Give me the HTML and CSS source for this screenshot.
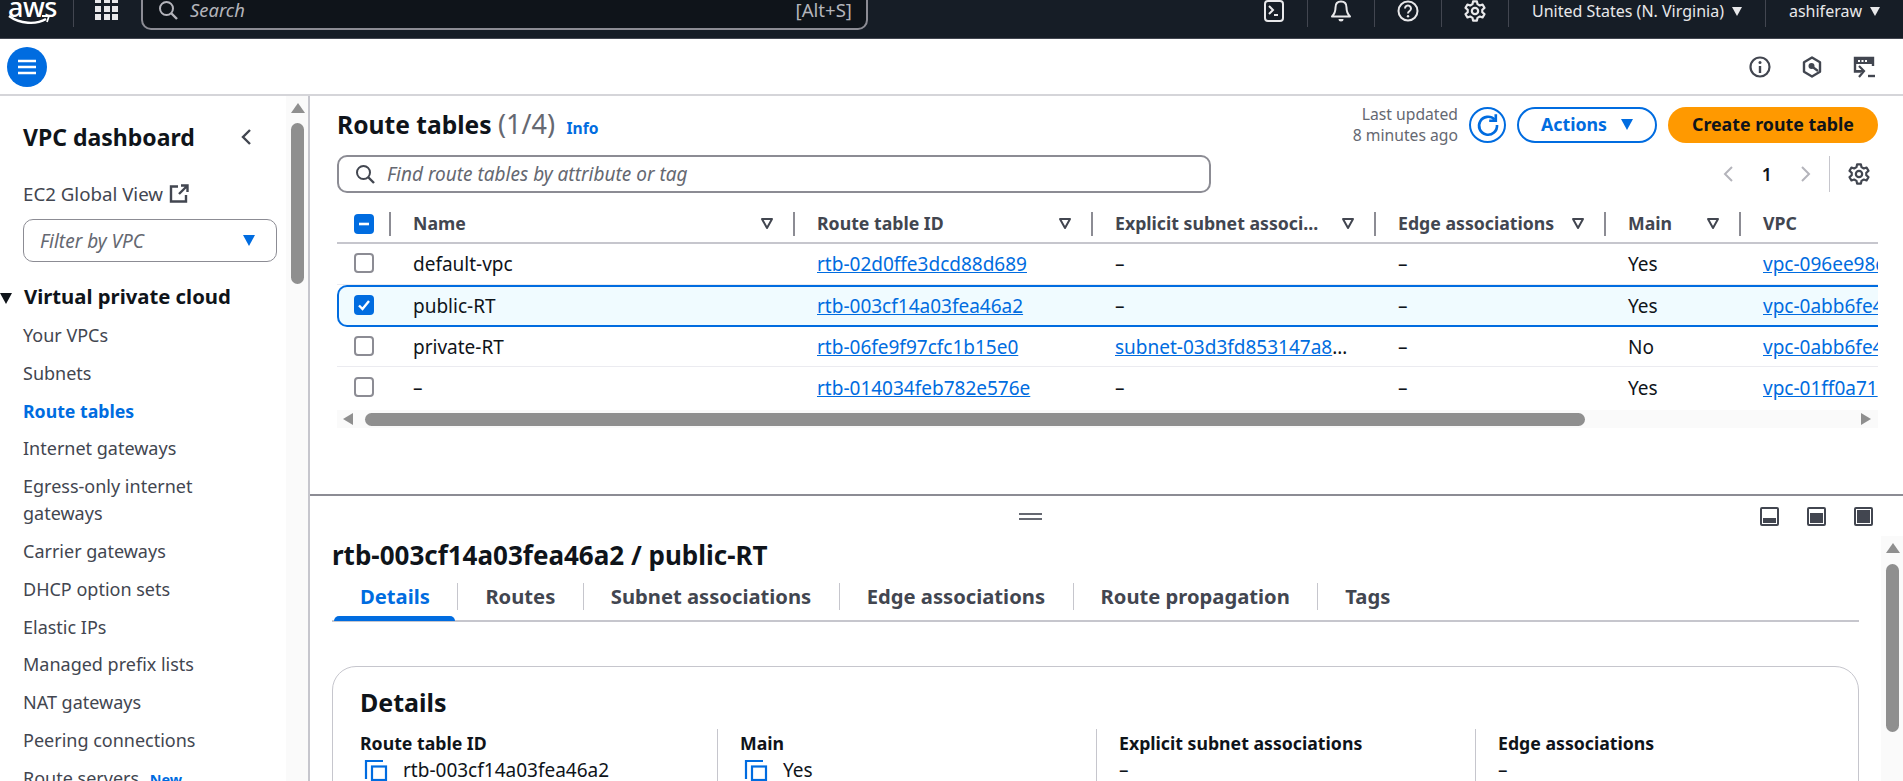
FILE: index.html
```html
<!DOCTYPE html>
<html lang="en">
<head>
    <meta charset="UTF-8">
    <title>Route tables | VPC Console</title>
    <link rel="stylesheet" href="styles.css">
</head>
<body>
    <svg class="defs" width="0" height="0">
        <symbol id="gear" viewBox="0 0 16 16">
            <path d="M6.6 1h2.8l.4 2 1.7 1 2-.7 1.4 2.4-1.6 1.4v1.8l1.6 1.4-1.4 2.4-2-.7-1.7 1-.4 2H6.600l-.4-2-1.700-1-2 .7-1.400-2.400 1.600-1.400V7.100L1.100 5.700l1.400-2.400 2 .7 1.700-1z" fill="none" stroke="currentColor" stroke-width="1.6" stroke-linejoin="round"/>
            <circle cx="8" cy="8" r="2.3" fill="none" stroke="currentColor" stroke-width="1.6"/>
        </symbol>
        <symbol id="sort" viewBox="0 0 14 14">
            <path d="M2 3h10l-5 9z" fill="none" stroke="currentColor" stroke-width="2" stroke-linejoin="round"/>
        </symbol>
        <symbol id="copy" viewBox="0 0 24 22">
            <path d="M2 20V2h17" fill="none" stroke="currentColor" stroke-width="2.2"/>
            <rect x="8" y="7.5" width="14" height="13.5" fill="none" stroke="currentColor" stroke-width="2.2"/>
        </symbol>
    </svg>

    <header class="topbar">
        <div class="logo">
            <span class="logo-text">aws</span>
            <svg class="smile" viewBox="0 0 42 10"><path d="M1 1c11 8 27 9 37 3" fill="none" stroke="#fff" stroke-width="2.4"/><path d="M34 1h7l-2 6" fill="none" stroke="#fff" stroke-width="1.8"/></svg>
        </div>
        <div class="top-sep sep-logo"></div>
        <div class="apps">
            <i></i><i></i><i></i><i></i><i></i><i></i><i></i><i></i><i></i>
        </div>
        <div class="top-search">
            <svg class="top-search-icon" viewBox="0 0 20 20"><circle cx="8.5" cy="8.5" r="6.5" fill="none" stroke="currentColor" stroke-width="2"/><path d="M13 13l6 6" stroke="currentColor" stroke-width="2.4"/></svg>
            <span class="top-search-text">Search</span>
            <span class="top-search-key">[Alt+S]</span>
        </div>
        <div class="top-right">
            <div class="top-item">
                <svg class="top-icon" viewBox="0 0 22 22"><rect x="2" y="1" width="18" height="20" rx="3" fill="none" stroke="currentColor" stroke-width="2"/><path d="M6 6l4 4-4 4M11 15h4" fill="none" stroke="currentColor" stroke-width="2"/></svg>
            </div>
            <div class="top-item">
                <svg class="top-icon" viewBox="0 0 22 22"><path d="M11 1.500c-3.500 0-5.500 2.500-5.500 6 0 4-1 6.500-3.500 9h18c-2.500-2.500-3.500-5-3.500-9 0-3.500-2-6-5.500-6z" fill="none" stroke="currentColor" stroke-width="2" stroke-linejoin="round"/><path d="M8.500 19a2.500 2.500 0 0 0 5 0z" fill="currentColor"/></svg>
            </div>
            <div class="top-item">
                <svg class="top-icon" viewBox="0 0 22 22"><circle cx="11" cy="11" r="9.5" fill="none" stroke="currentColor" stroke-width="2"/><path d="M8 8.500a3 3 0 1 1 4.600 2.500c-1 .7-1.600 1.200-1.600 2.500" fill="none" stroke="currentColor" stroke-width="2"/><circle cx="11" cy="16.3" r="1.2" fill="currentColor"/></svg>
            </div>
            <div class="top-item">
                <svg class="top-icon"><use href="#gear"/></svg>
            </div>
            <div class="top-item top-text">United States (N. Virginia)<span class="caret caret-white"></span></div>
            <div class="top-item top-text top-last">ashiferaw<span class="caret caret-white"></span></div>
        </div>
    </header>

    <div class="subbar">
        <button class="menu-btn">
            <svg viewBox="0 0 20 16" width="20" height="16"><path d="M1 2h18M1 8h18M1 14h18" stroke="#fff" stroke-width="2.6"/></svg>
        </button>
        <div class="subbar-icons">
            <svg viewBox="0 0 22 22"><circle cx="11" cy="11" r="9.5" fill="none" stroke="currentColor" stroke-width="2.2"/><path d="M11 10v7" stroke="currentColor" stroke-width="2.4"/><circle cx="11" cy="6.5" r="1.5" fill="currentColor"/></svg>
            <svg viewBox="0 0 22 22"><path d="M11 1.500l8 4.700v9.600l-8 4.700-8-4.700V6.200z" fill="none" stroke="currentColor" stroke-width="2.4" stroke-linejoin="round"/><circle cx="10.5" cy="10" r="3" fill="currentColor"/><path d="M11 10.500l6 4.500" stroke="currentColor" stroke-width="2.2"/></svg>
            <svg viewBox="0 0 22 22"><path d="M8 15.500H2V2h18v8" fill="none" stroke="currentColor" stroke-width="2.4"/><path d="M2 2h18v6H2z" fill="currentColor"/><path d="M5 5h2M8.500 5h2M12 5h2" stroke="#fff" stroke-width="2"/><path d="M6 10l5 5-5 6M1 15h9" fill="none" stroke="currentColor" stroke-width="2.2"/><path d="M15 20h7" stroke="currentColor" stroke-width="2.4"/></svg>
        </div>
    </div>

    <div class="layout">
        <aside class="sidebar">
            <nav class="nav">
                <div class="nav-title">
                    <span>VPC dashboard</span>
                    <svg viewBox="0 0 12 18" width="12" height="18"><path d="M10 2L3 9l7 7" fill="none" stroke="currentColor" stroke-width="2.4"/></svg>
                </div>
                <div class="nav-global">
                    EC2 Global View
                    <svg viewBox="0 0 20 20" width="20" height="20"><path d="M9 2.500H2v15h15V11" fill="none" stroke="currentColor" stroke-width="2.4"/><path d="M12 1.500h6.500V8M18 2l-8 8" fill="none" stroke="currentColor" stroke-width="2.4"/></svg>
                </div>
                <div class="nav-filter">
                    <span>Filter by VPC</span>
                    <span class="caret caret-blue"></span>
                </div>
                <div class="nav-section"><span class="caret caret-dark"></span>Virtual private cloud</div>
                <ul class="nav-list">
                    <li>Your VPCs</li>
                    <li>Subnets</li>
                    <li class="active">Route tables</li>
                    <li>Internet gateways</li>
                    <li>Egress-only internet gateways</li>
                    <li>Carrier gateways</li>
                    <li>DHCP option sets</li>
                    <li>Elastic IPs</li>
                    <li>Managed prefix lists</li>
                    <li>NAT gateways</li>
                    <li>Peering connections</li>
                    <li>Route servers <span class="new">New</span></li>
                </ul>
            </nav>
            <div class="vbar">
                <span class="vbar-up"></span>
                <span class="vbar-thumb nav-thumb"></span>
            </div>
        </aside>

        <main class="main">
            <section class="list-pane">
                <div class="list-head">
                    <h1 class="list-title">Route tables <span class="count">(1/4)</span> <a class="info">Info</a></h1>
                    <div class="list-actions">
                        <div class="updated">Last updated<br>8 minutes ago</div>
                        <button class="btn-refresh">
                            <svg viewBox="0 0 20 20" width="24" height="24"><path d="M15.500 5.500A7.500 7.500 0 1 0 17.500 10" fill="none" stroke="currentColor" stroke-width="2.2"/><path d="M16.500 1v5.500H11" fill="none" stroke="currentColor" stroke-width="2.2"/></svg>
                        </button>
                        <button class="btn btn-outline">Actions<span class="caret caret-blue"></span></button>
                        <button class="btn btn-primary">Create route table</button>
                    </div>
                </div>

                <div class="list-tools">
                    <div class="find">
                        <svg viewBox="0 0 20 20" width="20" height="20"><circle cx="8.5" cy="8.5" r="6.5" fill="none" stroke="currentColor" stroke-width="2"/><path d="M13 13l6 6" stroke="currentColor" stroke-width="2.4"/></svg>
                        <span>Find route tables by attribute or tag</span>
                    </div>
                    <div class="pager">
                        <svg viewBox="0 0 12 18" width="12" height="18"><path d="M10 2L3 9l7 7" fill="none" stroke="currentColor" stroke-width="2"/></svg>
                        <b>1</b>
                        <svg viewBox="0 0 12 18" width="12" height="18"><path d="M2 2l7 7-7 7" fill="none" stroke="currentColor" stroke-width="2"/></svg>
                    </div>
                    <div class="pager-gear"><svg width="22" height="22"><use href="#gear"/></svg></div>
                </div>

                <div class="table-wrap">
                    <table class="routes">
                        <colgroup>
                            <col class="c-check"><col class="c-name"><col class="c-id"><col class="c-explicit"><col class="c-edge"><col class="c-main"><col class="c-vpc">
                        </colgroup>
                        <thead>
                            <tr>
                                <th><div class="th-box th-check"><span class="check check-on"><svg viewBox="0 0 20 20"><path d="M5 10h10" stroke="#fff" stroke-width="2.6"/></svg></span></div></th>
                                <th><div class="th-box">Name<svg class="sort"><use href="#sort"/></svg></div></th>
                                <th><div class="th-box">Route table ID<svg class="sort"><use href="#sort"/></svg></div></th>
                                <th><div class="th-box">Explicit subnet associ...<svg class="sort"><use href="#sort"/></svg></div></th>
                                <th><div class="th-box">Edge associations<svg class="sort"><use href="#sort"/></svg></div></th>
                                <th><div class="th-box">Main<svg class="sort"><use href="#sort"/></svg></div></th>
                                <th><div class="th-box th-last">VPC</div></th>
                            </tr>
                        </thead>
                        <tbody>
                            <tr>
                                <td><span class="check"></span></td>
                                <td>default-vpc</td>
                                <td><a>rtb-02d0ffe3dcd88d689</a></td>
                                <td>–</td>
                                <td>–</td>
                                <td>Yes</td>
                                <td><a>vpc-096ee98c</a></td>
                            </tr>
                            <tr class="selected">
                                <td><span class="check check-on"><svg viewBox="0 0 20 20"><path d="M5 10.500l3.500 3.500 6.500-8" fill="none" stroke="#fff" stroke-width="2.4"/></svg></span></td>
                                <td>public-RT</td>
                                <td><a>rtb-003cf14a03fea46a2</a></td>
                                <td>–</td>
                                <td>–</td>
                                <td>Yes</td>
                                <td><a>vpc-0abb6fe4</a></td>
                            </tr>
                            <tr>
                                <td><span class="check"></span></td>
                                <td>private-RT</td>
                                <td><a>rtb-06fe9f97cfc1b15e0</a></td>
                                <td><a>subnet-03d3fd853147a8</a>…</td>
                                <td>–</td>
                                <td>No</td>
                                <td><a>vpc-0abb6fe4</a></td>
                            </tr>
                            <tr>
                                <td><span class="check"></span></td>
                                <td>–</td>
                                <td><a>rtb-014034feb782e576e</a></td>
                                <td>–</td>
                                <td>–</td>
                                <td>Yes</td>
                                <td><a>vpc-01ff0a71</a></td>
                            </tr>
                        </tbody>
                    </table>
                </div>

                <div class="hbar">
                    <span class="hbar-left"></span>
                    <span class="hbar-thumb"></span>
                    <span class="hbar-right"></span>
                </div>
            </section>

            <section class="detail-pane">
                <div class="detail-tools">
                    <span class="handle"></span>
                    <div class="split-icons">
                        <span class="split split-low"><i></i></span>
                        <span class="split split-mid"><i></i></span>
                        <span class="split split-full"><i></i></span>
                    </div>
                </div>
                <div class="detail-body">
                    <div class="detail">
                        <h2 class="detail-title">rtb-003cf14a03fea46a2 / public-RT</h2>
                        <div class="tabs">
                            <span class="tab tab-active">Details</span>
                            <span class="tab">Routes</span>
                            <span class="tab">Subnet associations</span>
                            <span class="tab">Edge associations</span>
                            <span class="tab">Route propagation</span>
                            <span class="tab tab-last">Tags</span>
                        </div>
                        <div class="card">
                            <h3 class="card-title">Details</h3>
                            <div class="fields">
                                <div class="field">
                                    <div class="field-label">Route table ID</div>
                                    <div class="field-value"><svg class="copy"><use href="#copy"/></svg>rtb-003cf14a03fea46a2</div>
                                </div>
                                <div class="field">
                                    <div class="field-label">Main</div>
                                    <div class="field-value"><svg class="copy"><use href="#copy"/></svg>Yes</div>
                                </div>
                                <div class="field">
                                    <div class="field-label">Explicit subnet associations</div>
                                    <div class="field-value">–</div>
                                </div>
                                <div class="field">
                                    <div class="field-label">Edge associations</div>
                                    <div class="field-value">–</div>
                                </div>
                            </div>
                        </div>
                    </div>
                    <div class="vbar vbar-detail">
                        <span class="vbar-up"></span>
                        <span class="vbar-thumb detail-thumb"></span>
                    </div>
                </div>
            </section>
        </main>
    </div>
</body>
</html>
```

FILE: styles.css
```css
* {
    box-sizing: border-box;
}
html, body {
    margin: 0;
    height: 781px;
    overflow: hidden;
}
body {
    font-family: "Noto Sans", "Open Sans", sans-serif;
    font-size: 19px;
    color: #0f141a;
    background: #fff;
    display: flex;
    flex-direction: column;
}
a {
    color: #006ce0;
    text-decoration: underline;
}
button {
    font-family: inherit;
    cursor: pointer;
}
h1, h2, h3 {
    margin: 0;
}
.defs {
    position: absolute;
}

/* carets */
.caret {
    display: inline-block;
    width: 0;
    height: 0;
    border-left: 6px solid transparent;
    border-right: 6px solid transparent;
    border-top: 11px solid currentColor;
}
.caret-white {
    color: #e8e8ea;
    margin-left: 8px;
    border-left-width: 5.5px;
    border-right-width: 5.5px;
    border-top-width: 9px;
}
.caret-blue {
    color: #006ce0;
}
.caret-dark {
    color: #0f141a;
    margin-left: -23px;
    margin-right: 12px;
}

/* top bar */
.topbar {
    height: 39px;
    flex: none;
    background: #161d26;
    border-bottom: 1px solid #424650;
    color: #e8e8ea;
    display: flex;
    align-items: flex-start;
    overflow: hidden;
}
.logo {
    width: 73px;
    padding-left: 8px;
    height: 27px;
}
.logo-text {
    display: block;
    font-size: 27px;
    font-weight: 500;
    line-height: 20px;
    margin-top: -3px;
    letter-spacing: -.5px;
    color: #fff;
}
.smile {
    display: block;
    width: 42px;
    height: 10px;
    margin-top: -2px;
}
.top-sep {
    width: 1px;
    height: 27px;
    background: #424650;
}
.apps {
    width: 23px;
    margin-left: 21px;
    margin-top: -3px;
    display: grid;
    grid-template-columns: repeat(3, 6px);
    grid-auto-rows: 6px;
    gap: 2.5px;
}
.apps i {
    background: #e8e8ea;
}
.top-search {
    width: 727px;
    height: 50px;
    margin-left: 23px;
    margin-top: -20px;
    flex: none;
    background: #0f141a;
    border: 2px solid #8c8c94;
    border-radius: 10px;
    padding: 17px 14px 0 15px;
    display: flex;
    align-items: flex-start;
    color: #b4b4bb;
}
.top-search-icon {
    width: 20px;
    height: 20px;
    margin-top: 1px;
}
.top-search-text {
    margin-left: 12px;
    font-style: italic;
    font-size: 18.4px;
    line-height: 22px;
}
.top-search-key {
    margin-left: auto;
    font-size: 18.6px;
    line-height: 22px;
}
.top-right {
    margin-left: auto;
    display: flex;
    height: 27px;
}
.top-item {
    height: 27px;
    padding: 0 22px;
    border-right: 1px solid #424650;
    display: flex;
    align-items: flex-start;
}
.top-icon {
    display: block;
    width: 22px;
    height: 22px;
}
.top-text {
    font-size: 16px;
    line-height: 22px;
    align-items: center;
    padding: 0 23px 5px;
}
.top-last {
    border-right: none;
}

/* second bar */
.subbar {
    height: 57px;
    flex: none;
    border-bottom: 2px solid #d5d5d9;
    display: flex;
    align-items: center;
    justify-content: space-between;
    padding: 0 28px 0 7px;
}
.menu-btn {
    width: 40px;
    height: 40px;
    border-radius: 50%;
    border: none;
    background: #006ce0;
    display: flex;
    align-items: center;
    justify-content: center;
    padding: 0;
}
.subbar-icons {
    display: flex;
    gap: 30px;
    color: #424650;
}
.subbar-icons svg {
    width: 22px;
    height: 22px;
}

.layout {
    flex: 1;
    display: flex;
    min-height: 0;
}

/* left nav */
.sidebar {
    width: 310px;
    flex: none;
    display: flex;
    border-right: 2px solid #c6c6cd;
}
.nav {
    width: 286px;
    flex: none;
    padding: 28px 9px 0 23px;
    color: #424650;
    font-size: 18px;
}
.nav-title {
    display: flex;
    justify-content: space-between;
    align-items: center;
    font-size: 23px;
    font-weight: 700;
    line-height: 26px;
    color: #0f141a;
    padding-right: 25px;
}
.nav-title svg {
    color: #424650;
}
.nav-global {
    margin-top: 32px;
    font-size: 18.7px;
    line-height: 24px;
    display: flex;
    align-items: center;
    gap: 6px;
}
.nav-filter {
    margin-top: 13px;
    height: 43px;
    border: 1px solid #8c8c94;
    border-radius: 10px;
    padding: 0 21px 0 16px;
    display: flex;
    align-items: center;
    justify-content: space-between;
    font-size: 19px;
    font-style: italic;
    color: #656871;
}
.nav-section {
    margin-top: 21px;
    font-size: 20.3px;
    font-weight: 700;
    line-height: 26px;
    color: #0f141a;
    white-space: nowrap;
}
.nav-list {
    list-style: none;
    margin: 13px 0 0;
    padding: 0;
    max-width: 240px;
    display: flex;
    flex-direction: column;
    gap: 10.8px;
    line-height: 27px;
}
.nav-list .active {
    color: #006ce0;
    font-weight: 700;
    font-size: 17.7px;
}
.new {
    color: #006ce0;
    font-size: 14.4px;
    font-weight: 700;
    margin-left: 6px;
}

/* scrollbars */
.vbar {
    width: 22px;
    flex: none;
    background: #fafafa;
    padding: 7px 4px 0 5px;
}
.vbar-up {
    display: block;
    width: 0;
    height: 0;
    margin: 0 auto;
    border-left: 7px solid transparent;
    border-right: 7px solid transparent;
    border-bottom: 10px solid #8f8f8f;
}
.vbar-thumb {
    display: block;
    background: #8f8f8f;
    border-radius: 7px;
    width: 13px;
}
.nav-thumb {
    height: 161px;
    margin-top: 10px;
}
.detail-thumb {
    height: 168px;
    margin-top: 11px;
}

/* route tables list */
.main {
    flex: 1;
    min-width: 0;
    display: flex;
    flex-direction: column;
}
.list-pane {
    height: 400px;
    flex: none;
    padding: 11px 25px 0 27px;
    border-bottom: 2px solid #8c8c94;
}
.list-head {
    display: flex;
    justify-content: space-between;
    height: 36px;
}
.list-title {
    font-size: 24.6px;
    font-weight: 700;
    line-height: 34px;
    white-space: nowrap;
}
.count {
    font-size: 27px;
    font-weight: 400;
    color: #656871;
}
.info {
    font-size: 15.6px;
    color: #006ce0;
    text-decoration: none;
    margin-left: 5px;
}
.list-actions {
    display: flex;
    align-items: center;
}
.updated {
    text-align: right;
    font-size: 15.7px;
    line-height: 21px;
    color: #656871;
}
.btn-refresh {
    width: 37px;
    height: 36px;
    margin-left: 11px;
    border: 2px solid #006ce0;
    border-radius: 50%;
    background: #fff;
    color: #006ce0;
    padding: 0;
    display: flex;
    align-items: center;
    justify-content: center;
}
.btn {
    height: 36px;
    border-radius: 18px;
    font-size: 17.8px;
    font-weight: 700;
    display: flex;
    align-items: center;
    justify-content: center;
    padding: 0 0 2px;
}
.btn-outline {
    width: 140px;
    margin-left: 11px;
    gap: 14px;
    border: 2px solid #006ce0;
    background: #fff;
    color: #006ce0;
}
.btn-primary {
    width: 210px;
    margin-left: 11px;
    border: none;
    background: #ff9900;
    color: #0f141a;
}
.list-tools {
    margin-top: 13px;
    height: 36px;
    display: flex;
    align-items: center;
}
.find {
    width: 874px;
    height: 38px;
    border: 2px solid #8c8c94;
    border-radius: 10px;
    padding: 0 16px;
    display: flex;
    align-items: center;
    gap: 12px;
    color: #424650;
}
.find span {
    font-style: italic;
    color: #656871;
}
.pager {
    margin-left: auto;
    display: flex;
    align-items: center;
    gap: 28px;
    color: #b4b4bb;
    padding-right: 17px;
}
.pager b {
    color: #0f141a;
    font-size: 17.8px;
    font-weight: 600;
}
.pager-gear {
    height: 36px;
    padding: 7px 8px 0 18px;
    border-left: 1px solid #c6c6cd;
    color: #424650;
}

/* table */
.table-wrap {
    margin-top: 13px;
    overflow: hidden;
}
.routes {
    width: 1645px;
    table-layout: fixed;
    border-collapse: separate;
    border-spacing: 0;
    white-space: nowrap;
}
.c-check { width: 54px; }
.c-name { width: 404px; }
.c-id { width: 298px; }
.c-explicit { width: 283px; }
.c-edge { width: 230px; }
.c-main { width: 135px; }
.c-vpc { width: 241px; }
.routes th {
    height: 39px;
    padding: 0;
    text-align: left;
    color: #424650;
    font-size: 17.7px;
    font-weight: 700;
    border-bottom: 2px solid #c6c6cd;
}
.th-box {
    height: 24px;
    padding: 0 19px 2px 22px;
    border-right: 2px solid #8c8c94;
    display: flex;
    align-items: center;
    justify-content: space-between;
}
.th-check {
    padding: 0 0 0 17px;
}
.th-last {
    border-right: none;
}
.sort {
    width: 14px;
    height: 14px;
    color: #424650;
}
.routes td {
    height: 41px;
    padding: 0 0 0 22px;
    border-bottom: 1px solid #ebebf0;
    line-height: 24px;
}
.routes td:first-child {
    padding-left: 17px;
    padding-bottom: 2px;
    line-height: 0;
}
.routes tbody tr:last-child td {
    border-bottom: none;
}
.selected td {
    height: 42px;
    background: #f0fbff;
    border-top: 2px solid #006ce0;
    border-bottom: 2px solid #006ce0 !important;
}
.selected td:first-child {
    border-left: 2px solid #006ce0;
    border-radius: 10px 0 0 10px;
    padding-left: 15px;
}
.selected + tr td {
    height: 40px;
}
.check {
    display: inline-block;
    width: 20px;
    height: 20px;
    border: 2px solid #8c8c94;
    border-radius: 4px;
    background: #fff;
    vertical-align: middle;
}
.check-on {
    border: none;
    background: #006ce0;
}
.check svg {
    display: block;
    width: 20px;
    height: 20px;
}
.hbar {
    margin-top: 2px;
    width: 1541px;
    height: 18px;
    background: #fafafa;
    display: flex;
    align-items: center;
    padding: 0 7px 0 6px;
}
.hbar-left, .hbar-right {
    width: 0;
    height: 0;
    border-top: 6px solid transparent;
    border-bottom: 6px solid transparent;
}
.hbar-left {
    border-right: 10px solid #8f8f8f;
}
.hbar-right {
    margin-left: auto;
    border-left: 10px solid #8f8f8f;
}
.hbar-thumb {
    width: 1220px;
    height: 13px;
    margin-left: 12px;
    border-radius: 7px;
    background: #8f8f8f;
}

/* details split panel */
.detail-pane {
    flex: 1;
    min-height: 0;
    display: flex;
    flex-direction: column;
    overflow: hidden;
}
.detail-tools {
    height: 40px;
    flex: none;
    padding: 11px 30px 0 709px;
    display: flex;
    justify-content: space-between;
}
.handle {
    width: 23px;
    height: 7px;
    margin-top: 6px;
    border-top: 2px solid #656871;
    border-bottom: 2px solid #656871;
}
.split-icons {
    display: flex;
    gap: 28px;
}
.split {
    width: 19px;
    height: 19px;
    border: 2px solid #424650;
    border-radius: 2px;
    padding: 1px;
    display: flex;
    align-items: flex-end;
}
.split i {
    display: block;
    width: 100%;
    background: #424650;
}
.split-low i { height: 5px; }
.split-mid i { height: 10px; }
.split-full i { height: 100%; }
.detail-body {
    flex: 1;
    min-height: 0;
    display: flex;
    overflow: hidden;
}
.detail {
    width: 1549px;
    flex: none;
    padding: 5px 0 0 22px;
}
.vbar-detail {
    margin-left: auto;
    padding-left: 5px;
}
.detail-title {
    font-size: 26px;
    font-weight: 700;
    line-height: 29px;
    white-space: nowrap;
}
.tabs {
    margin-top: 7px;
    padding-top: 6px;
    height: 45px;
    display: flex;
    align-items: flex-start;
    border-bottom: 2px solid #c6c6cd;
    font-size: 20.2px;
    font-weight: 700;
    color: #424650;
}
.tab {
    height: 27px;
    line-height: 27px;
    padding: 0 27.5px 0 27px;
    border-right: 1px solid #c6c6cd;
    position: relative;
}
.tab:first-child {
    padding-left: 28px;
}
.tab-last {
    border-right: none;
}
.tab-active {
    color: #006ce0;
}
.tab-active::after {
    content: "";
    position: absolute;
    left: 2px;
    right: 2px;
    bottom: -11px;
    height: 5px;
    border-radius: 5px 5px 0 0;
    background: #006ce0;
}
.card {
    margin-top: 44px;
    height: 200px;
    border: 1px solid #c6c6cd;
    border-radius: 24px;
    padding: 21px 0 0 27px;
}
.card-title {
    font-size: 25px;
    font-weight: 700;
    line-height: 28px;
}
.fields {
    margin-top: 13px;
    display: grid;
    grid-template-columns: 357px 379px 379px 1fr;
}
.field {
    border-left: 1px solid #c6c6cd;
    padding: 2px 0 20px 22px;
}
.field:first-child {
    border-left: none;
    padding-left: 0;
}
.field-label {
    font-size: 17.7px;
    font-weight: 700;
    line-height: 24px;
}
.field-value {
    margin-top: 3px;
    line-height: 24px;
    display: flex;
    align-items: center;
}
.copy {
    width: 24px;
    height: 22px;
    margin: 0 15px 0 4px;
    color: #006ce0;
}
```
